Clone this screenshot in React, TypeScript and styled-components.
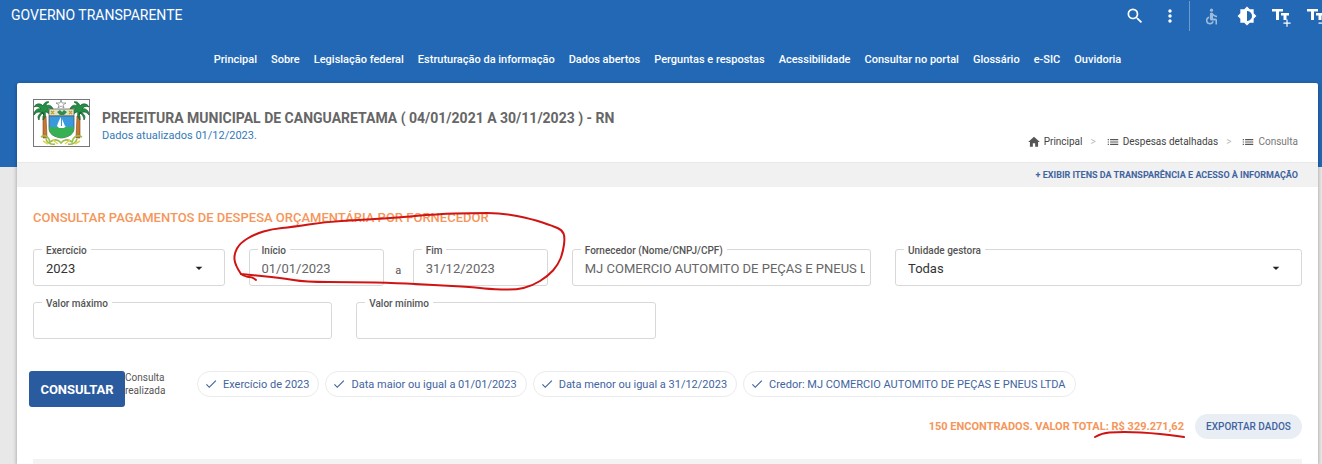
import React from 'react';
import styled, { createGlobalStyle } from 'styled-components';
import {
  MdAccessible,
  MdArrowDropDown,
  MdBrightness6,
  MdCheck,
  MdHome,
  MdList,
  MdMoreVert,
  MdSearch,
} from 'react-icons/md';

const GlobalStyle = createGlobalStyle`
  * { box-sizing: border-box; }
  body {
    margin: 0;
    background: #e8e8e8;
    color: #555;
    font-family: Roboto, sans-serif;
    font-size: 13px;
    overflow-x: hidden;
  }
  button, input, select { font-family: inherit; }
  a { color: inherit; text-decoration: none; }
  h1, h2, p, ul, ol { margin: 0; padding: 0; list-style: none; }
`;

const Page = styled.div`
  position: relative;
  overflow: hidden;
`;

const Header = styled.header`
  height: 167px;
  background: #2368b5;
  color: #fff;
`;

const TopBar = styled.div`
  display: flex;
  justify-content: space-between;
  height: 32px;
  padding-left: 11px;
`;

const Brand = styled.a`
  font-size: 14px;
  line-height: 30px;
`;

const Tools = styled.div`
  display: flex;
  margin-right: -12px;
`;

const ToolGroup = styled.div<{ $divided?: boolean }>`
  display: flex;
  align-items: center;
  height: 30px;
  margin-top: 1px;
  border-left: ${(p) => (p.$divided ? '1px solid #6d9acd' : '0')};
  padding: ${(p) => (p.$divided ? '0 0 0 4px' : '0 2px 0 0')};
`;

const ToolButton = styled.button<{ $faded?: boolean }>`
  display: flex;
  align-items: center;
  justify-content: center;
  width: 35px;
  height: 30px;
  padding: 0;
  border: 0;
  background: none;
  color: #fff;
  opacity: ${(p) => (p.$faded ? 0.55 : 1)};
`;

const MainNav = styled.nav`
  display: flex;
  justify-content: center;
  gap: 14px;
  padding: 18px 0 0 13px;
  font-size: 11px;
  font-weight: 500;
  line-height: 20px;
  white-space: nowrap;
`;

const Card = styled.main`
  min-height: calc(100vh - 83px);
  margin: -84px 4px 0 17px;
  border-radius: 2px 2px 0 0;
  background: #fff;
  box-shadow: 0 1px 4px rgba(0, 0, 0, 0.35);
`;

const CardHeader = styled.div`
  display: flex;
  justify-content: space-between;
  height: 79px;
  padding: 16px 20px 0 16px;
`;

const Entity = styled.div`
  display: flex;
  gap: 12px;
`;

const EntityText = styled.div`
  padding-top: 11px;
`;

const EntityName = styled.h1`
  color: #666;
  font-size: 14px;
  font-weight: 700;
  line-height: 17px;
`;

const Updated = styled.p`
  color: #337ab7;
  font-size: 11px;
  line-height: 17px;
`;

const Breadcrumb = styled.ol`
  display: flex;
  align-self: flex-end;
  padding-bottom: 11px;
  font-size: 10px;
  line-height: 18px;

  li + li::before {
    content: '>';
    margin: 0 10px 0 8px;
    color: #bbb;
  }
`;

const Crumb = styled.li<{ $current?: boolean }>`
  display: flex;
  align-items: center;
  color: ${(p) => (p.$current ? '#777' : '#444')};

  a { display: flex; align-items: center; gap: 3px; }
  svg { color: #555; }
`;

const ItemsBar = styled.div`
  height: 25px;
  padding-right: 20px;
  border-top: 1px solid #e8e8e8;
  background: #f1f1f1;
  color: #41649f;
  font-size: 9px;
  font-weight: 700;
  line-height: 25px;
  text-align: right;
`;

const Content = styled.div`
  padding: 22px 16px 0;
`;

const Title = styled.h2`
  color: #f5965a;
  font-size: 13px;
  font-weight: 500;
  line-height: 18px;
`;

const Filters = styled.form`
  display: grid;
  grid-template-columns: repeat(12, minmax(0, 1fr));
  gap: 16px 24px;
  padding-top: 22px;
`;

const Field = styled.div<{ $span?: number }>`
  position: relative;
  flex: 1;
  min-width: 0;
  grid-column: span ${(p) => p.$span ?? 1};
`;

const Period = styled.div`
  display: flex;
  grid-column: span 3;
`;

const Until = styled.span`
  width: 29px;
  padding-top: 14px;
  font-size: 11px;
  line-height: 16px;
  text-align: center;
`;

const FieldLabel = styled.label`
  position: absolute;
  top: -5px;
  left: 9px;
  padding: 0 4px;
  background: #fff;
  color: #555;
  font-size: 10px;
  font-weight: 500;
  line-height: 14px;
`;

const controlStyle = `
  display: block;
  width: 100%;
  height: 37px;
  padding: 2px 5px 0 12px;
  border: 1px solid #d8d8d8;
  border-radius: 3px;
  background: #fff;
  outline: none;
  font-size: 13px;
`;

const Input = styled.input`
  ${controlStyle}
  color: #666;
`;

const Select = styled.select`
  ${controlStyle}
  appearance: none;
  color: #333;
`;

const SelectArrow = styled(MdArrowDropDown)`
  position: absolute;
  top: 11px;
  right: 18px;
  color: #222;
  pointer-events: none;
`;

const QueryRow = styled.div`
  display: flex;
  align-items: flex-start;
  padding-top: 32px;
  margin-left: -4px;
`;

const SubmitButton = styled.button`
  width: 96px;
  height: 36px;
  padding: 0;
  border: 0;
  border-radius: 3px;
  background: #2a5b9f;
  color: #fff;
  font-size: 13px;
  font-weight: 700;
`;

const QueryLabel = styled.p`
  width: 72px;
  padding-right: 16px;
  font-size: 10px;
  line-height: 13px;
`;

const Chips = styled.ul`
  display: flex;
  gap: 6px;
`;

const Chip = styled.li`
  display: flex;
  align-items: center;
  gap: 5px;
  height: 26px;
  padding: 0 9px 0 6px;
  border: 1px solid #e9ebee;
  border-radius: 13px;
  color: #41649f;
  font-size: 11px;
  white-space: nowrap;
`;

const Summary = styled.div`
  display: flex;
  align-items: center;
  justify-content: flex-end;
  gap: 11px;
  padding-top: 7px;
`;

const Total = styled.p`
  color: #f5965a;
  font-size: 11px;
  font-weight: 700;
`;

const ExportButton = styled.button`
  width: 107px;
  height: 25px;
  padding: 0;
  border: 0;
  border-radius: 13px;
  background: #e9eef5;
  color: #41649f;
  font-size: 10px;
  font-weight: 500;
`;

const ResultsHead = styled.div`
  height: 5px;
  margin-top: 20px;
  background: #f3f3f3;
`;

const Markup = styled.svg`
  position: absolute;
  top: 0;
  left: 0;
  pointer-events: none;
`;

const TextSizeIcon = ({ larger }: { larger?: boolean }) => (
  <svg width="20" height="22" viewBox="0 0 20 22" fill="currentColor" aria-hidden="true">
    <path d="M0 4h11v2.600H7V15H4V6.600H0zM9 8h8v2.400h-2.500V15h-3v-4.600H9z" />
    <path d={larger ? 'M14.400 14.500h1.200v3h3v1.200h-3v3h-1.200v-3h-3v-1.200h3z' : 'M11.500 17.500h7v1.200h-7z'} />
  </svg>
);

const Palm = () => (
  <>
    <path d="M10 17l3 0 1 22-4 0z" fill="#c97730" stroke="#754719" strokeWidth=".6" />
    <path
      d="M11 16C8 12 4 12 1 16c0-5 4-7 7-6C6 7 3 7 1 8c2-4 7-4 9-1 1-3 3-5 6-4-2 1-3 2-3 4 3-2 6 0 7 3-3-1-5-1-6 0 3 1 5 4 4 7-2-3-4-4-6-4 1 3 0 6-2 8 0-3 1-5 0-7-2 1-4 4-4 7-2-3-1-6 4-8z"
      fill="#239044"
      stroke="#145c2b"
      strokeWidth=".7"
    />
  </>
);

const CoatOfArms = () => (
  <svg width="57" height="48" viewBox="0 0 57 48" role="img" aria-label="Brasão">
    <rect x=".5" y=".5" width="56" height="47" fill="#fff" stroke="#777" />
    <Palm />
    <g transform="translate(57 0) scale(-1 1)"><Palm /></g>
    <path d="M16 10h25v7H16z" fill="#dce5c8" stroke="#555" strokeWidth=".7" />
    <path d="M18 12l3 3m-3 0l3-3m15 0l3 3m-3 0l3-3" stroke="#c59e25" strokeWidth="1.3" />
    <path d="M24 13l3-2 2 2 2-2 3 2-3 3h-4z" fill="#328a4e" />
    <path d="M16 17h25v12c0 6-5 9-12.500 10C21 38 16 35 16 29z" fill="#3899df" stroke="#555" strokeWidth=".8" />
    <path d="M16 28h25v1c0 6-5 9-12.500 10C21 38 16 35 16 29z" fill="#35b153" />
    <path d="M28 18v9h-4c1-3 2-6 4-9zM29 20l3 7h-3zM24 27h9l-2 2h-5z" fill="#fff" />
    <path d="M28 1l1 3h4l-3 2 1 3-3-2-3 2 1-3-3-2h4z" fill="#fff" stroke="#666" strokeWidth=".6" />
    <path d="M8 38c4-3 8 0 9 5 4-3 8-3 11 1 3-4 7-4 11-1 1-5 5-8 10-5M13 40c1 4 5 6 9 5m22-5c-1 4-5 6-9 5" fill="none" stroke="#9abf4a" strokeWidth="1.600" />
    <path d="M10 42l5 3m32-3l-5 3M20 41l5 4m12-4l-5 4" stroke="#e1d64f" strokeWidth="1.500" />
  </svg>
);

type Point = [number, number];

// Joins hand-placed points with quadratic curves through their midpoints.
const smoothPath = (points: Point[]) => {
  const [first, ...rest] = points;
  const last = rest[rest.length - 1];
  const curves = rest.slice(0, -1).map(([x, y], i) => {
    const [nx, ny] = rest[i + 1];
    return `Q${x} ${y} ${(x + nx) / 2} ${(y + ny) / 2}`;
  });
  return `M${first.join(' ')}${curves.join('')}L${last.join(' ')}`;
};

const periodLoop: Point[] = [
  [241, 274], [235, 265], [234, 254], [240, 243], [255, 234], [272, 229], [292, 227], [325, 222],
  [358, 220], [392, 218], [438, 214], [472, 213], [502, 213], [532, 219], [553, 226], [562, 230],
  [565, 237], [563, 252], [558, 265], [548, 276], [532, 286], [515, 290], [488, 289], [472, 287],
  [432, 285], [398, 283], [352, 282], [305, 282], [282, 278], [241, 274],
];
const loopTail: Point[] = [[241, 274], [246, 277], [252, 277], [256, 280]];
const totalUnderline: Point[] = [
  [1095, 437], [1102, 433], [1117, 432], [1132, 432], [1150, 433], [1170, 435], [1184, 437],
];

const navItems = [
  'Principal', 'Sobre', 'Legislação federal', 'Estruturação da informação', 'Dados abertos',
  'Perguntas e respostas', 'Acessibilidade', 'Consultar no portal', 'Glossário', 'e-SIC', 'Ouvidoria',
];

const criteria = [
  'Exercício de 2023',
  'Data maior ou igual a 01/01/2023',
  'Data menor ou igual a 31/12/2023',
  'Credor: MJ COMERCIO AUTOMITO DE PEÇAS E PNEUS LTDA',
];

type FieldProps = { id: string; label: string; value?: string; span?: number };

const TextField = ({ id, label, value = '', span }: FieldProps) => (
  <Field $span={span}>
    <Input id={id} defaultValue={value} />
    <FieldLabel htmlFor={id}>{label}</FieldLabel>
  </Field>
);

const SelectField = ({ id, label, value, span }: FieldProps) => (
  <Field $span={span}>
    <Select id={id} defaultValue={value}><option>{value}</option></Select>
    <FieldLabel htmlFor={id}>{label}</FieldLabel>
    <SelectArrow size={16} />
  </Field>
);

export default function App() {
  return (
    <Page>
      <GlobalStyle />
      <Header>
        <TopBar>
          <Brand href="#">GOVERNO TRANSPARENTE</Brand>
          <Tools>
            <ToolGroup>
              <ToolButton aria-label="Buscar"><MdSearch size={20} /></ToolButton>
              <ToolButton aria-label="Mais opções"><MdMoreVert size={20} /></ToolButton>
            </ToolGroup>
            <ToolGroup $divided>
              <ToolButton $faded aria-label="Acessibilidade"><MdAccessible size={19} /></ToolButton>
              <ToolButton aria-label="Contraste"><MdBrightness6 size={20} /></ToolButton>
              <ToolButton aria-label="Aumentar texto"><TextSizeIcon larger /></ToolButton>
              <ToolButton aria-label="Diminuir texto"><TextSizeIcon /></ToolButton>
            </ToolGroup>
          </Tools>
        </TopBar>
        <MainNav>
          {navItems.map((item) => <a href="#" key={item}>{item}</a>)}
        </MainNav>
      </Header>
      <Card>
        <CardHeader>
          <Entity>
            <CoatOfArms />
            <EntityText>
              <EntityName>PREFEITURA MUNICIPAL DE CANGUARETAMA ( 04/01/2021 A 30/11/2023 ) - RN</EntityName>
              <Updated>Dados atualizados 01/12/2023.</Updated>
            </EntityText>
          </Entity>
          <Breadcrumb>
            <Crumb><a href="#"><MdHome size={14} />Principal</a></Crumb>
            <Crumb><a href="#"><MdList size={14} />Despesas detalhadas</a></Crumb>
            <Crumb $current><a href="#"><MdList size={14} />Consulta</a></Crumb>
          </Breadcrumb>
        </CardHeader>
        <ItemsBar><a href="#">+ EXIBIR ITENS DA TRANSPARÊNCIA E ACESSO À INFORMAÇÃO</a></ItemsBar>
        <Content>
          <Title>CONSULTAR PAGAMENTOS DE DESPESA ORÇAMENTÁRIA POR FORNECEDOR</Title>
          <Filters id="filtros">
            <SelectField id="exercicio" label="Exercício" value="2023" span={2} />
            <Period>
              <TextField id="inicio" label="Início" value="01/01/2023" />
              <Until>a</Until>
              <TextField id="fim" label="Fim" value="31/12/2023" />
            </Period>
            <TextField id="fornecedor" label="Fornecedor (Nome/CNPJ/CPF)" value="MJ COMERCIO AUTOMITO DE PEÇAS E PNEUS LTDA" span={3} />
            <SelectField id="unidade" label="Unidade gestora" value="Todas" span={4} />
            <TextField id="maximo" label="Valor máximo" span={3} />
            <TextField id="minimo" label="Valor mínimo" span={3} />
          </Filters>
          <QueryRow>
            <SubmitButton type="submit" form="filtros">CONSULTAR</SubmitButton>
            <QueryLabel>Consulta realizada</QueryLabel>
            <Chips>
              {criteria.map((text) => <Chip key={text}><MdCheck size={14} />{text}</Chip>)}
            </Chips>
          </QueryRow>
          <Summary>
            <Total>150 ENCONTRADOS. VALOR TOTAL: R$ 329.271,62</Total>
            <ExportButton>EXPORTAR DADOS</ExportButton>
          </Summary>
          <ResultsHead />
        </Content>
      </Card>
      <Markup width="1322" height="464" fill="none" stroke="#d01414" strokeWidth="2" strokeLinecap="round" strokeLinejoin="round" aria-hidden="true">
        <path d={smoothPath(periodLoop)} />
        <path d={smoothPath(loopTail)} />
        <path d={smoothPath(totalUnderline)} />
      </Markup>
    </Page>
  );
}
